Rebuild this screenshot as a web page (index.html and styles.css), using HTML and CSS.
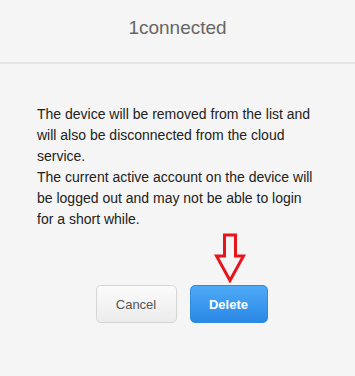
FILE: index.html
```html
<!DOCTYPE html>
<html>
<head>
<meta charset="utf-8">
<link rel="stylesheet" href="styles.css">
</head>
<body>
<div class="dialog">
  <div class="header">1connected</div>
  <div class="content">
    <p class="message">The device will be removed from the list and will also be disconnected from the cloud service.<br>The current active account on the device will be logged out and may not be able to login for a short while.</p>
  </div>
  <div class="actions">
    <button class="btn btn-cancel">Cancel</button>
    <div class="delete-wrap">
      <svg class="arrow" width="32" height="50" viewBox="0 0 32 50">
        <path d="M10.5 2 H21.5 V23 H29.5 L16 47.5 L2.5 23 H10.5 Z" fill="none" stroke="#e8141c" stroke-width="3" stroke-linejoin="miter"/>
      </svg>
      <button class="btn btn-delete">Delete</button>
    </div>
  </div>
</div>
</body>
</html>
```
FILE: styles.css
```css
html, body {
  margin: 0;
  padding: 0;
  background: #f5f5f5;
}
.dialog {
  width: 355px;
  height: 376px;
  background: #f5f5f5;
  font-family: "Liberation Sans", Arial, sans-serif;
}
.header {
  height: 62px;
  line-height: 56px;
  text-align: center;
  font-size: 19px;
  color: #666;
  border-bottom: 2px solid #e6e6e6;
}
.content {
  padding: 40px 0 0 37px;
}
.message {
  margin: 0;
  width: 280px;
  font-size: 14px;
  line-height: 21px;
  color: #222;
}
.actions {
  display: flex;
  justify-content: center;
  gap: 13px;
  margin-top: 55px;
  padding-left: 8px;
}
.delete-wrap {
  position: relative;
}
.arrow {
  position: absolute;
  left: 24px;
  top: -52px;
}
.btn {
  height: 38px;
  border-radius: 5px;
  font-family: "Liberation Sans", Arial, sans-serif;
  font-size: 13px;
  padding: 0;
  cursor: pointer;
}
.btn-cancel {
  width: 81px;
  border: 1px solid #d6d6d6;
  background: linear-gradient(#fbfbfb, #ececec);
  color: #555;
}
.btn-delete {
  width: 78px;
  border: 1px solid #2d8be0;
  background: linear-gradient(#4eaaf6, #2a88e6);
  color: #fff;
  font-weight: bold;
}
```
